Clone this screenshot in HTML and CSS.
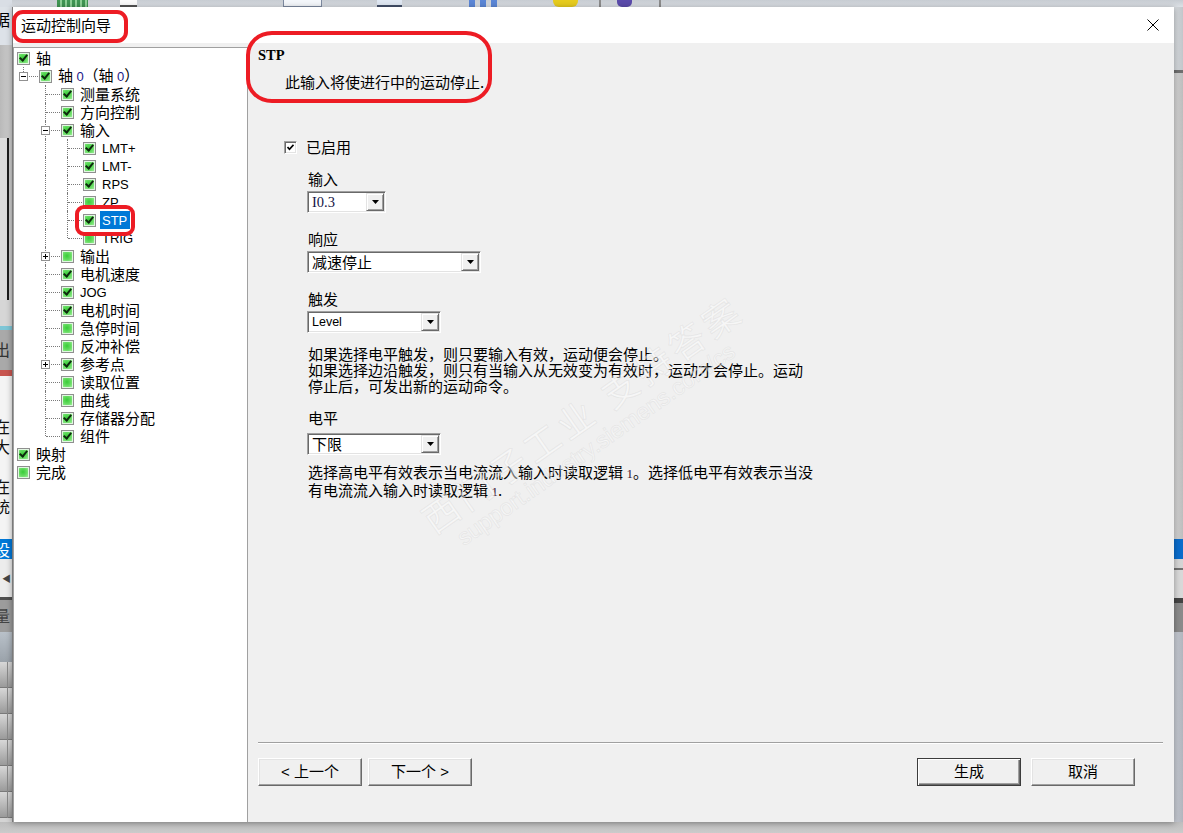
FILE: index.html
```html
<!DOCTYPE html>
<html lang="zh-CN">
<head>
<meta charset="utf-8">
<title>运动控制向导</title>
<link rel="stylesheet" href="styles.css">
</head>
<body>
<div class="desk">
  <div class="bg-top">
    <span class="tp w12 c-a"></span><span class="tp w45"></span><span class="tp w31 c-green"></span><span class="tp w32"></span><span class="tp w17 c-white"></span><span class="tp w146"></span><span class="tp w39 c-box"></span><span class="tp w55"></span><span class="tp w25 c-box2"></span><span class="tp w67"></span><span class="tp w31 c-blue"></span><span class="tp w53"></span><span class="tp w25 c-yellow"></span><span class="tp w21"></span><span class="tp w2 c-sep"></span><span class="tp w16"></span><span class="tp w15 c-purple"></span><span class="tp w27"></span><span class="tp w2 c-sep"></span>
  </div>

  <div class="bg-left">
    <div class="lb l1"><span class="ch">据</span></div>
    <div class="lb l2"></div>
    <div class="lb l3"></div>
    <div class="lb l4"></div>
    <div class="lb l5"></div>
    <div class="lb l6"><span class="ch">出</span></div>
    <div class="lb l7"></div>
    <div class="lb l8"><span class="ch c1">在</span><span class="ch">大</span><span class="ch c2">在</span><span class="ch">统</span></div>
    <div class="lb l9"><span class="ch">设</span></div>
    <div class="lb l10"><span class="arrow">◀</span></div>
    <div class="lb l11"></div>
    <div class="lb l12"><span class="ch">量</span></div>
    <div class="lb l13"></div>
    <div class="lb l14"></div>
    <div class="lb l15"></div>
  </div>

  <div class="dialog">
    <div class="titlebar">
      <span class="title">运动控制向导</span>
      <svg class="close" width="12" height="12" viewBox="0 0 12 12"><path d="M0.5 0.5 L11.5 11.5 M11.5 0.5 L0.5 11.5" stroke="#000" stroke-width="1" fill="none"/></svg>
    </div>
    <div class="body">
      <div class="tree">
        <div class="row"><span class="cb on"></span><span class="lbl">轴</span></div>
        <div class="row"><span class="g l"><i class="exp"></i></span><span class="cb on"></span><span class="lbl">轴 <span class="num">0</span>（轴 <span class="num">0</span>）</span></div>
        <div class="row"><span class="g"></span><span class="g t"></span><span class="cb on"></span><span class="lbl">测量系统</span></div>
        <div class="row"><span class="g"></span><span class="g t"></span><span class="cb on"></span><span class="lbl">方向控制</span></div>
        <div class="row"><span class="g"></span><span class="g t"><i class="exp"></i></span><span class="cb on"></span><span class="lbl">输入</span></div>
        <div class="row"><span class="g"></span><span class="g v"></span><span class="g t"></span><span class="cb on"></span><span class="lbl lat">LMT+</span></div>
        <div class="row"><span class="g"></span><span class="g v"></span><span class="g t"></span><span class="cb on"></span><span class="lbl lat">LMT-</span></div>
        <div class="row"><span class="g"></span><span class="g v"></span><span class="g t"></span><span class="cb on"></span><span class="lbl lat">RPS</span></div>
        <div class="row"><span class="g"></span><span class="g v"></span><span class="g t"></span><span class="cb"></span><span class="lbl lat">ZP</span></div>
        <div class="row"><span class="g"></span><span class="g v"></span><span class="g t"></span><span class="cb on"></span><span class="lbl lat sel">STP</span></div>
        <div class="row"><span class="g"></span><span class="g v"></span><span class="g l"></span><span class="cb"></span><span class="lbl lat">TRIG</span></div>
        <div class="row"><span class="g"></span><span class="g t"><i class="exp plus"></i></span><span class="cb"></span><span class="lbl">输出</span></div>
        <div class="row"><span class="g"></span><span class="g t"></span><span class="cb on"></span><span class="lbl">电机速度</span></div>
        <div class="row"><span class="g"></span><span class="g t"></span><span class="cb on"></span><span class="lbl lat">JOG</span></div>
        <div class="row"><span class="g"></span><span class="g t"></span><span class="cb on"></span><span class="lbl">电机时间</span></div>
        <div class="row"><span class="g"></span><span class="g t"></span><span class="cb"></span><span class="lbl">急停时间</span></div>
        <div class="row"><span class="g"></span><span class="g t"></span><span class="cb"></span><span class="lbl">反冲补偿</span></div>
        <div class="row"><span class="g"></span><span class="g t"><i class="exp plus"></i></span><span class="cb on"></span><span class="lbl">参考点</span></div>
        <div class="row"><span class="g"></span><span class="g t"></span><span class="cb"></span><span class="lbl">读取位置</span></div>
        <div class="row"><span class="g"></span><span class="g t"></span><span class="cb"></span><span class="lbl">曲线</span></div>
        <div class="row"><span class="g"></span><span class="g t"></span><span class="cb on"></span><span class="lbl">存储器分配</span></div>
        <div class="row"><span class="g"></span><span class="g l"></span><span class="cb on"></span><span class="lbl">组件</span></div>
        <div class="row"><span class="cb on"></span><span class="lbl">映射</span></div>
        <div class="row"><span class="cb"></span><span class="lbl">完成</span></div>
      </div>

      <div class="main">
        <div class="wm">
          <div class="wm-cn">西门子工业 支持答案</div>
          <div class="wm-url">support.industry.siemens.com/cs</div>
        </div>

        <div class="hd-title">STP</div>
        <div class="hd-desc">此输入将使进行中的运动停止.</div>

        <div class="enable">
          <span class="chk"><svg width="7" height="7" viewBox="0 0 7 7"><path d="M0.5 3 L2.5 5.2 L6.5 0.8" stroke="#000" stroke-width="1.7" fill="none"/></svg></span>
          <span class="enable-lbl">已启用</span>
        </div>

        <div class="form">
          <div class="grp">
            <div class="flbl">输入</div>
            <div class="combo w-io"><span class="val io">I0.3</span><span class="drop"><svg width="7" height="4" viewBox="0 0 7 4"><path d="M0 0 H7 L3.5 4 Z" fill="#000"/></svg></span></div>
          </div>
          <div class="grp gap">
            <div class="flbl">响应</div>
            <div class="combo w-resp"><span class="val">减速停止</span><span class="drop"><svg width="7" height="4" viewBox="0 0 7 4"><path d="M0 0 H7 L3.5 4 Z" fill="#000"/></svg></span></div>
          </div>
          <div class="grp gap">
            <div class="flbl">触发</div>
            <div class="combo w-trig"><span class="val lv">Level</span><span class="drop"><svg width="7" height="4" viewBox="0 0 7 4"><path d="M0 0 H7 L3.5 4 Z" fill="#000"/></svg></span></div>
          </div>
          <p class="para p1">如果选择电平触发，则只要输入有效，运动便会停止。<br>如果选择边沿触发，则只有当输入从无效变为有效时，运动才会停止。运动<br>停止后，可发出新的运动命令。</p>
          <div class="grp gap2">
            <div class="flbl">电平</div>
            <div class="combo w-lvl lvl-combo"><span class="val">下限</span><span class="drop"><svg width="7" height="4" viewBox="0 0 7 4"><path d="M0 0 H7 L3.5 4 Z" fill="#000"/></svg></span></div>
          </div>
          <p class="para p2">选择高电平有效表示当电流流入输入时读取逻辑 <span class="one">1</span>。选择低电平有效表示当没<br>有电流流入输入时读取逻辑 <span class="one">1</span>.</p>
        </div>

        <div class="footer">
          <div class="sep"></div>
          <div class="btns">
            <button class="btn">&lt; 上一个</button>
            <button class="btn">下一个 &gt;</button>
            <span class="spacer"></span>
            <button class="btn def">生成</button>
            <button class="btn">取消</button>
          </div>
        </div>
      </div>
    </div>
  </div>

  <div class="bg-right">
    <div class="rb r1"></div>
    <div class="rb r2"></div>
    <div class="rb r3"></div>
    <div class="rb r4"></div>
    <div class="rb r5"></div>
    <div class="rb r6"></div>
    <div class="rb r7"></div>
    <div class="rb r8"></div>
    <div class="rb r9"></div>
    <div class="rb r10"></div>
  </div>

  <div class="bg-bottom"></div>

  <div class="ann ann-title"></div>
  <div class="ann ann-head"></div>
  <div class="ann ann-stp"></div>
</div>
</body>
</html>
```

FILE: styles.css
```css
html, body {
  margin: 0;
  padding: 0;
  background: #c8c8c8;
}
body {
  font-family: "Liberation Sans", "Noto Sans CJK SC", sans-serif;
  font-size: 15px;
  color: #000;
}

.desk {
  position: relative;
  width: 1183px;
  height: 833px;
  overflow: hidden;
  display: grid;
  grid-template-columns: 12px 1162px 9px;
  grid-template-rows: 7px 815px 11px;
}

/* ---------- background application ---------- */
.bg-top {
  grid-column: 1 / -1;
  grid-row: 1;
  display: flex;
  background: linear-gradient(#c7ccd2, #dde1e6);
  overflow: hidden;
}
.tp { flex: none; height: 7px; }
.w2 { width: 2px; } .w12 { width: 12px; } .w15 { width: 15px; } .w16 { width: 16px; }
.w17 { width: 17px; } .w21 { width: 21px; } .w25 { width: 25px; } .w27 { width: 27px; }
.w31 { width: 31px; } .w32 { width: 32px; } .w39 { width: 39px; } .w45 { width: 45px; }
.w53 { width: 53px; } .w55 { width: 55px; } .w67 { width: 67px; } .w146 { width: 146px; }
.c-a { background: #d9dee5; }
.c-green { background: repeating-linear-gradient(90deg, #3f9552 0 3px, #8ccf95 3px 5px); }
.c-white { background: #fafafa; border-bottom: 2px solid #555; box-sizing: border-box; }
.c-box { background: #f3f6fa; border: 1px solid #7d8aa0; border-top: none; box-sizing: border-box; }
.c-box2 { background: #dfe7f2; border-bottom: 2px solid #44506a; box-sizing: border-box; }
.c-blue { background: repeating-linear-gradient(90deg, #5b86d6 0 6px, transparent 6px 11px); }
.c-yellow { background: #e6cb1e; border-radius: 0 0 6px 6px; }
.c-sep { background: #8c8c8c; }
.c-purple { background: #5b4bab; border-radius: 0 0 5px 5px; }

.bg-left {
  grid-column: 1;
  grid-row: 2;
  display: flex;
  flex-direction: column;
  overflow: hidden;
}
.lb { flex: none; overflow: hidden; position: relative; }
.lb .ch {
  display: block;
  margin-left: -6px;
  font-family: "Noto Sans CJK SC", sans-serif;
  font-size: 16px;
  line-height: 18px;
}
.l1 { height: 38px; background: #dde2e8; padding-top: 3px; box-sizing: border-box; }
.l2 { height: 93px; background: linear-gradient(90deg, #b9b9b9, #cfcfcf); }
.l3 { height: 162px; background: linear-gradient(90deg, #dedede 7px, #1f1f1f 7px 9px, #cdcdcd 9px); }
.l4 { height: 26px; background: #d6d6d6; }
.l5 { height: 4px; background: #7ec6d6; }
.l6 { height: 40px; background: #a9a9a9; padding-top: 10px; box-sizing: border-box; }
.l6 .ch { color: #333; }
.l7 { height: 6px; background: #c8554f; }
.l8 { height: 163px; background: #f4f4f4; padding-top: 40px; box-sizing: border-box; }
.l8 .ch { color: #111; line-height: 20px; }
.l8 .c2 { margin-top: 20px; }
.l9 { height: 20px; background: #0078d7; }
.l9 .ch { color: #fff; line-height: 20px; }
.l10 { height: 38px; background: #ececec; display: flex; align-items: center; }
.arrow { font-size: 9px; color: #444; margin-left: 2px; }
.l11 { height: 3px; background: #505050; }
.l12 { height: 32px; background: #9c9c9c; padding-top: 6px; box-sizing: border-box; }
.l12 .ch { color: #444; }
.l13 { height: 30px; background: linear-gradient(#b9c1c9, #9aa2aa); }
.l14 { height: 156px; background:
  linear-gradient(90deg, transparent 7px, #8a8a8a 7px 8px, transparent 8px),
  repeating-linear-gradient(#d8d8d8 0, #9a9a9a 25px, #7a7a7a 25px 26px); }
.l15 { height: 4px; background: #d4d4d4; }

.bg-right {
  grid-column: 3;
  grid-row: 2;
  display: flex;
  flex-direction: column;
}
.rb { flex: none; }
.r1 { height: 63px; background: linear-gradient(90deg, #d9dde1, #c2c6ca); }
.r2 { height: 3px; background: #6e6e6e; }
.r3 { height: 466px; background: linear-gradient(90deg, #d6d6d6, #bdbdbd); }
.r4 { height: 20px; background: #0a6ccb; }
.r5 { height: 9px; background: #d4d4d4; }
.r6 { height: 2px; background: #707070; }
.r7 { height: 28px; background: #d8d8d8; }
.r8 { height: 5px; background: #444; }
.r9 { height: 29px; background: #8a8a8a; }
.r10 { height: 190px; background: linear-gradient(90deg, #c9cdd5, #b1b5bd); }

.bg-bottom {
  grid-column: 1 / -1;
  grid-row: 3;
  background: linear-gradient(#bdbdbd, #cbcbcb);
}

/* ---------- dialog ---------- */
.dialog {
  grid-column: 2;
  grid-row: 2;
  display: flex;
  flex-direction: column;
  background: #f0f0f0;
  border-left: 1px solid #7a7a7a;
  box-shadow: 0 1px 6px rgba(0, 0, 0, 0.35);
  position: relative;
  z-index: 1;
}
.titlebar {
  height: 36px;
  flex: none;
  background: #fff;
  display: flex;
  align-items: center;
  justify-content: space-between;
  padding: 0 15px 0 8px;
}
.title {
  font-family: "Noto Sans CJK SC", sans-serif;
  font-size: 15px;
  line-height: 36px;
}
.close { display: block; }

.body {
  flex: 1;
  display: grid;
  grid-template-columns: 235px 1fr;
  min-height: 0;
}

/* ---------- tree ---------- */
.tree {
  margin-top: 4px;
  background: #fff;
  border: 1px solid #a0a0a0;
  border-bottom: none;
  padding-top: 1px;
}
.row {
  display: flex;
  align-items: center;
  height: 18px;
}
.g {
  flex: none;
  width: 22px;
  height: 18px;
  position: relative;
}
.g.v::before, .g.t::before {
  content: "";
  position: absolute;
  left: 9px;
  top: 0;
  bottom: 0;
  border-left: 1px dotted #7a7a7a;
}
.g.l::before {
  content: "";
  position: absolute;
  left: 9px;
  top: 0;
  height: 9px;
  border-left: 1px dotted #7a7a7a;
}
.g.t::after, .g.l::after {
  content: "";
  position: absolute;
  left: 10px;
  top: 9px;
  width: 14px;
  border-top: 1px dotted #7a7a7a;
}
.exp {
  position: absolute;
  left: 5px;
  top: 5px;
  width: 9px;
  height: 9px;
  box-sizing: border-box;
  border: 1px solid #919191;
  background: #fff;
  z-index: 1;
}
.exp::before {
  content: "";
  position: absolute;
  left: 1px;
  top: 3px;
  width: 5px;
  height: 1px;
  background: #000;
}
.exp.plus::after {
  content: "";
  position: absolute;
  left: 3px;
  top: 1px;
  width: 1px;
  height: 5px;
  background: #000;
}
.cb {
  flex: none;
  width: 13px;
  height: 13px;
  box-sizing: border-box;
  margin: 0 4px 0 3px;
  border: 1px solid #8f8f8f;
  background: radial-gradient(circle at 45% 45%, #38cc38 0, #66dc62 45%, #b6f4b0 100%);
  box-shadow: inset 0 0 0 1px #e2f7e2;
  position: relative;
}
.cb.on::after {
  content: "";
  position: absolute;
  left: 3px;
  top: 0px;
  width: 3px;
  height: 6px;
  border: solid #0d2a0d;
  border-width: 0 2px 2px 0;
  transform: rotate(40deg);
}
.lbl {
  font-family: "Noto Sans CJK SC", sans-serif;
  font-size: 15px;
  line-height: 18px;
  padding: 0 2px;
  white-space: nowrap;
}
.lbl .num {
  font-family: "Liberation Sans", sans-serif;
  font-size: 13px;
  color: #1a1a8a;
}
.lbl.lat {
  font-family: "Liberation Sans", sans-serif;
  font-size: 13px;
  height: 18px;
  box-sizing: border-box;
  padding-top: 2px;
  line-height: 16px;
}
.lbl.sel {
  background: #0078d7;
  color: #fff;
  padding: 2px 3px 0 2px;
}

/* ---------- main panel ---------- */
.main {
  position: relative;
  display: flex;
  flex-direction: column;
  padding: 0 11px 0 10px;
  overflow: hidden;
}
.hd-title {
  padding-top: 4px;
  font-family: "Liberation Serif", serif;
  font-weight: bold;
  font-size: 14.5px;
  line-height: 16px;
}
.hd-desc {
  margin: 10px 0 0 27px;
  font-family: "Noto Sans CJK SC", sans-serif;
  font-size: 15px;
  line-height: 18px;
}
.enable {
  margin: 47px 0 0 26px;
  display: flex;
  align-items: center;
  height: 18px;
}
.chk {
  flex: none;
  width: 13px;
  height: 13px;
  box-sizing: border-box;
  border: 1px solid;
  border-color: #a0a0a0 #fff #fff #a0a0a0;
  box-shadow: inset 1px 1px #696969, inset -1px -1px #e3e3e3;
  background: #fff;
  display: flex;
  align-items: center;
  justify-content: center;
}
.chk svg { display: block; }
.enable-lbl {
  margin-left: 9px;
  font-family: "Noto Sans CJK SC", sans-serif;
  line-height: 18px;
}

.form {
  margin: 14px 0 0 49px;
  display: flex;
  flex-direction: column;
  align-items: flex-start;
}
.grp {
  display: flex;
  flex-direction: column;
  align-items: flex-start;
}
.grp.gap { margin-top: 17px; }
.grp.gap2 { margin-top: 15px; }
.flbl {
  padding-left: 1px;
  font-family: "Noto Sans CJK SC", sans-serif;
  line-height: 18px;
  margin-bottom: 3px;
}
.lvl-combo { margin-top: 3px; }
.combo {
  display: flex;
  height: 22px;
  box-sizing: border-box;
  border: 1px solid;
  border-color: #a0a0a0 #fff #fff #a0a0a0;
  box-shadow: inset 1px 1px #696969, inset -1px -1px #e3e3e3;
  background: #fff;
  padding: 1px;
}
.w-io { width: 79px; }
.w-resp { width: 174px; }
.w-trig { width: 134px; }
.w-lvl { width: 134px; }
.combo .val {
  flex: 1;
  padding-left: 3px;
  font-family: "Noto Sans CJK SC", sans-serif;
  font-size: 15px;
  line-height: 18px;
  white-space: nowrap;
  overflow: hidden;
}
.combo .val.io {
  font-family: "Liberation Serif", serif;
  font-size: 14.5px;
  color: #141446;
}
.combo .val.lv {
  font-family: "Liberation Sans", sans-serif;
  font-size: 12.5px;
}
.drop {
  flex: none;
  width: 18px;
  height: 18px;
  box-sizing: border-box;
  border: 1px solid;
  border-color: #e3e3e3 #696969 #696969 #e3e3e3;
  box-shadow: inset 1px 1px #fff, inset -1px -1px #a0a0a0;
  background: #f0f0f0;
  display: flex;
  align-items: center;
  justify-content: center;
}
.drop svg { display: block; }

.para {
  margin: 0;
  padding-left: 1px;
  font-family: "Noto Sans CJK SC", sans-serif;
  font-size: 15px;
  line-height: 16px;
  white-space: nowrap;
}
.p1 { margin-top: 13px; }
.p2 { margin-top: 9px; }
.one {
  font-family: "Liberation Serif", serif;
  font-size: 13px;
  color: #3a1030;
}

.footer {
  margin-top: auto;
  padding-bottom: 36px;
}
.sep {
  height: 1px;
  background: #a0a0a0;
  border-bottom: 1px solid #fff;
}
.btns {
  margin-top: 14px;
  display: flex;
  gap: 6px;
  padding-right: 28px;
}
.spacer { flex: 1; }
.btn {
  flex: none;
  width: 104px;
  height: 28px;
  margin: 0;
  padding: 0;
  box-sizing: border-box;
  border: 1px solid;
  border-color: #fff #696969 #696969 #fff;
  box-shadow: inset -1px -1px #a0a0a0, inset 1px 1px #e3e3e3;
  background: #f0f0f0;
  font-family: "Liberation Sans", "Noto Sans CJK SC", sans-serif;
  font-size: 15px;
  color: #000;
  line-height: 24px;
}
.btn.def {
  border: 1px solid #3c3c3c;
  box-shadow: inset 1px 1px #fff, inset -1px -1px #696969, inset -2px -2px #a0a0a0;
  margin-right: 4px;
}

/* watermark (faint, drawn behind the form content) */
.wm {
  position: absolute;
  left: 165px;
  top: 462px;
  transform: rotate(-35deg);
  transform-origin: left top;
  pointer-events: none;
  white-space: nowrap;
}
.wm-cn {
  font-family: "Noto Sans CJK SC", sans-serif;
  font-size: 36px;
  line-height: 42px;
  letter-spacing: 5px;
  color: rgba(255, 255, 255, 0.45);
  -webkit-text-stroke: 1px rgba(170, 170, 170, 0.16);
}
.wm-url {
  margin-left: 18px;
  font-family: "Liberation Sans", sans-serif;
  font-size: 23px;
  line-height: 26px;
  color: rgba(255, 255, 255, 0.45);
  -webkit-text-stroke: 1px rgba(170, 170, 170, 0.16);
}

/* red annotations */
.ann {
  position: absolute;
  box-sizing: border-box;
  border: 4px solid #ed1c24;
  z-index: 5;
  pointer-events: none;
}
.ann-title { left: 12px; top: 10px; width: 116px; height: 33px; border-radius: 11px; }
.ann-head { left: 246px; top: 31px; width: 246px; height: 72px; border-radius: 26px / 24px; }
.ann-stp { left: 75px; top: 205px; width: 60px; height: 31px; border-radius: 9px; }
```
